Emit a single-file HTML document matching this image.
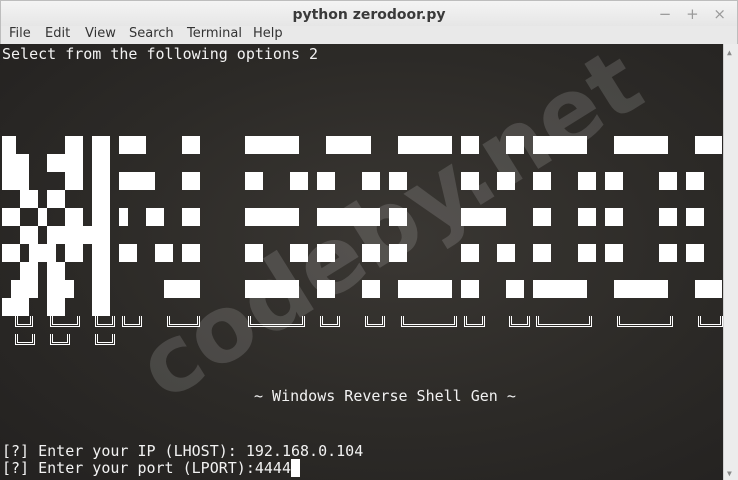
<!DOCTYPE html>
<html><head><meta charset="utf-8"><style>
*{margin:0;padding:0;box-sizing:border-box}
html,body{width:738px;height:480px;overflow:hidden}
body{background:#2a2825;position:relative;font-family:"DejaVu Sans Mono","Liberation Mono",monospace}
#title{position:absolute;left:0;top:0;width:738px;height:26px;background:linear-gradient(#f4f4f4,#e6e6e6);border:1px solid #bdbdbd;border-bottom:none;text-align:center;font:bold 14px "DejaVu Sans","Liberation Sans",sans-serif;color:#3a3a3a;line-height:28px}
#ctl{position:absolute;right:12px;top:0;font:15px "DejaVu Sans",sans-serif;color:#9a9a9a;line-height:28px;word-spacing:10px}
#menu{position:absolute;left:0;top:26px;width:738px;height:18px;background:#e9e9e9;font:13px "DejaVu Sans","Liberation Sans",sans-serif;color:#333;line-height:16px;border-left:1px solid #bdbdbd;border-right:1px solid #bdbdbd}
#menu span{position:absolute;top:0}
#term{position:absolute;left:0;top:44px;width:723px;height:436px;background:radial-gradient(ellipse at 55% 45%,#3a3733 0%,#2c2a27 55%,#232120 100%);overflow:hidden}
#sb{position:absolute;left:723px;top:44px;width:15px;height:436px;background:#ececec;border-left:1px solid #d0d0d0}
.t{position:absolute;color:#f2f2f2;font-size:15px;line-height:17px;white-space:pre}
.b{position:absolute;background:#fff;height:18px}
.f{position:absolute;border:3px double #fff;border-top:none;height:11px}
#wm{position:absolute;left:20px;top:116px;height:130px;font:bold 92px "DejaVu Sans","Liberation Sans",sans-serif;color:rgba(255,255,255,0.14);transform:rotate(-32deg);transform-origin:center;white-space:nowrap;width:740px;text-align:center;line-height:130px}
</style></head><body>
<div id="title">python zerodoor.py</div>
<div id="ctl">− + ×</div>
<div id="menu"><span style="left:8px">File</span><span style="left:44px">Edit</span><span style="left:84px">View</span><span style="left:128px">Search</span><span style="left:186px">Terminal</span><span style="left:252px">Help</span></div>
<div id="term">
<div id="wm">codeby.net</div>
</div>
<div id="sb"><div style="position:absolute;left:3px;top:4px;font-size:8px;color:#888">▲</div><div style="position:absolute;left:3px;bottom:2px;font-size:8px;color:#888">▼</div></div>
<div class="t" style="left:2px;top:46px">Select from the following options 2</div>
<div id="art"></div>
<div class="t" style="left:254px;top:388px">~ Windows Reverse Shell Gen ~</div>
<div class="t" style="left:2px;top:443px">[?] Enter your IP (LHOST): 192.168.0.104</div>
<div class="t" style="left:2px;top:460px">[?] Enter your port (LPORT):4444<span style="background:#fff"> </span></div>
<script>
var rows={
136:[[2,16],[65,83],[92,110],[119,146],[182,200],[245,299],[326,371],[398,452],[461,479],[506,524],[533,587],[614,668],[695,722]],
154:[[2,29],[47,83],[92,110]],
172:[[2,29],[65,83],[92,110],[119,155],[182,200],[245,263],[290,308],[317,335],[362,380],[389,407],[461,479],[497,515],[533,551],[578,596],[605,623],[659,677],[686,704]],
190:[[20,38],[47,65],[92,110]],
208:[[2,20],[38,47],[65,83],[92,110],[119,128],[146,164],[182,200],[245,299],[317,380],[389,407],[461,506],[533,551],[578,596],[605,623],[659,677],[686,704]],
226:[[20,38],[47,110]],
244:[[2,20],[29,56],[65,83],[92,110],[119,137],[155,173],[182,200],[245,263],[290,308],[317,335],[362,380],[389,407],[461,479],[497,515],[533,551],[578,596],[605,623],[659,677],[686,704]],
262:[[20,38],[47,65],[92,110]],
280:[[11,38],[47,74],[92,110],[164,200],[245,299],[317,335],[362,380],[398,452],[461,479],[506,524],[533,587],[614,668],[695,722]],
298:[[2,29],[47,65],[92,110]]};
var h='';
for(var y in rows)rows[y].forEach(function(s){h+='<div class="b" style="left:'+s[0]+'px;top:'+y+'px;width:'+(s[1]-s[0])+'px"></div>'});
[[15,33],[50,80],[95,115],[122,142],[167,200],[248,305],[320,340],[365,385],[401,457],[464,485],[509,530],[536,592],[617,673],[698,723]].forEach(function(s){h+='<div class="f" style="left:'+s[0]+'px;top:316px;width:'+(s[1]-s[0])+'px"></div>'});
[[15,35],[50,70],[95,115]].forEach(function(s){h+='<div class="f" style="left:'+s[0]+'px;top:334px;width:'+(s[1]-s[0])+'px"></div>'});
document.getElementById('art').innerHTML=h;
</script>
</body></html>
